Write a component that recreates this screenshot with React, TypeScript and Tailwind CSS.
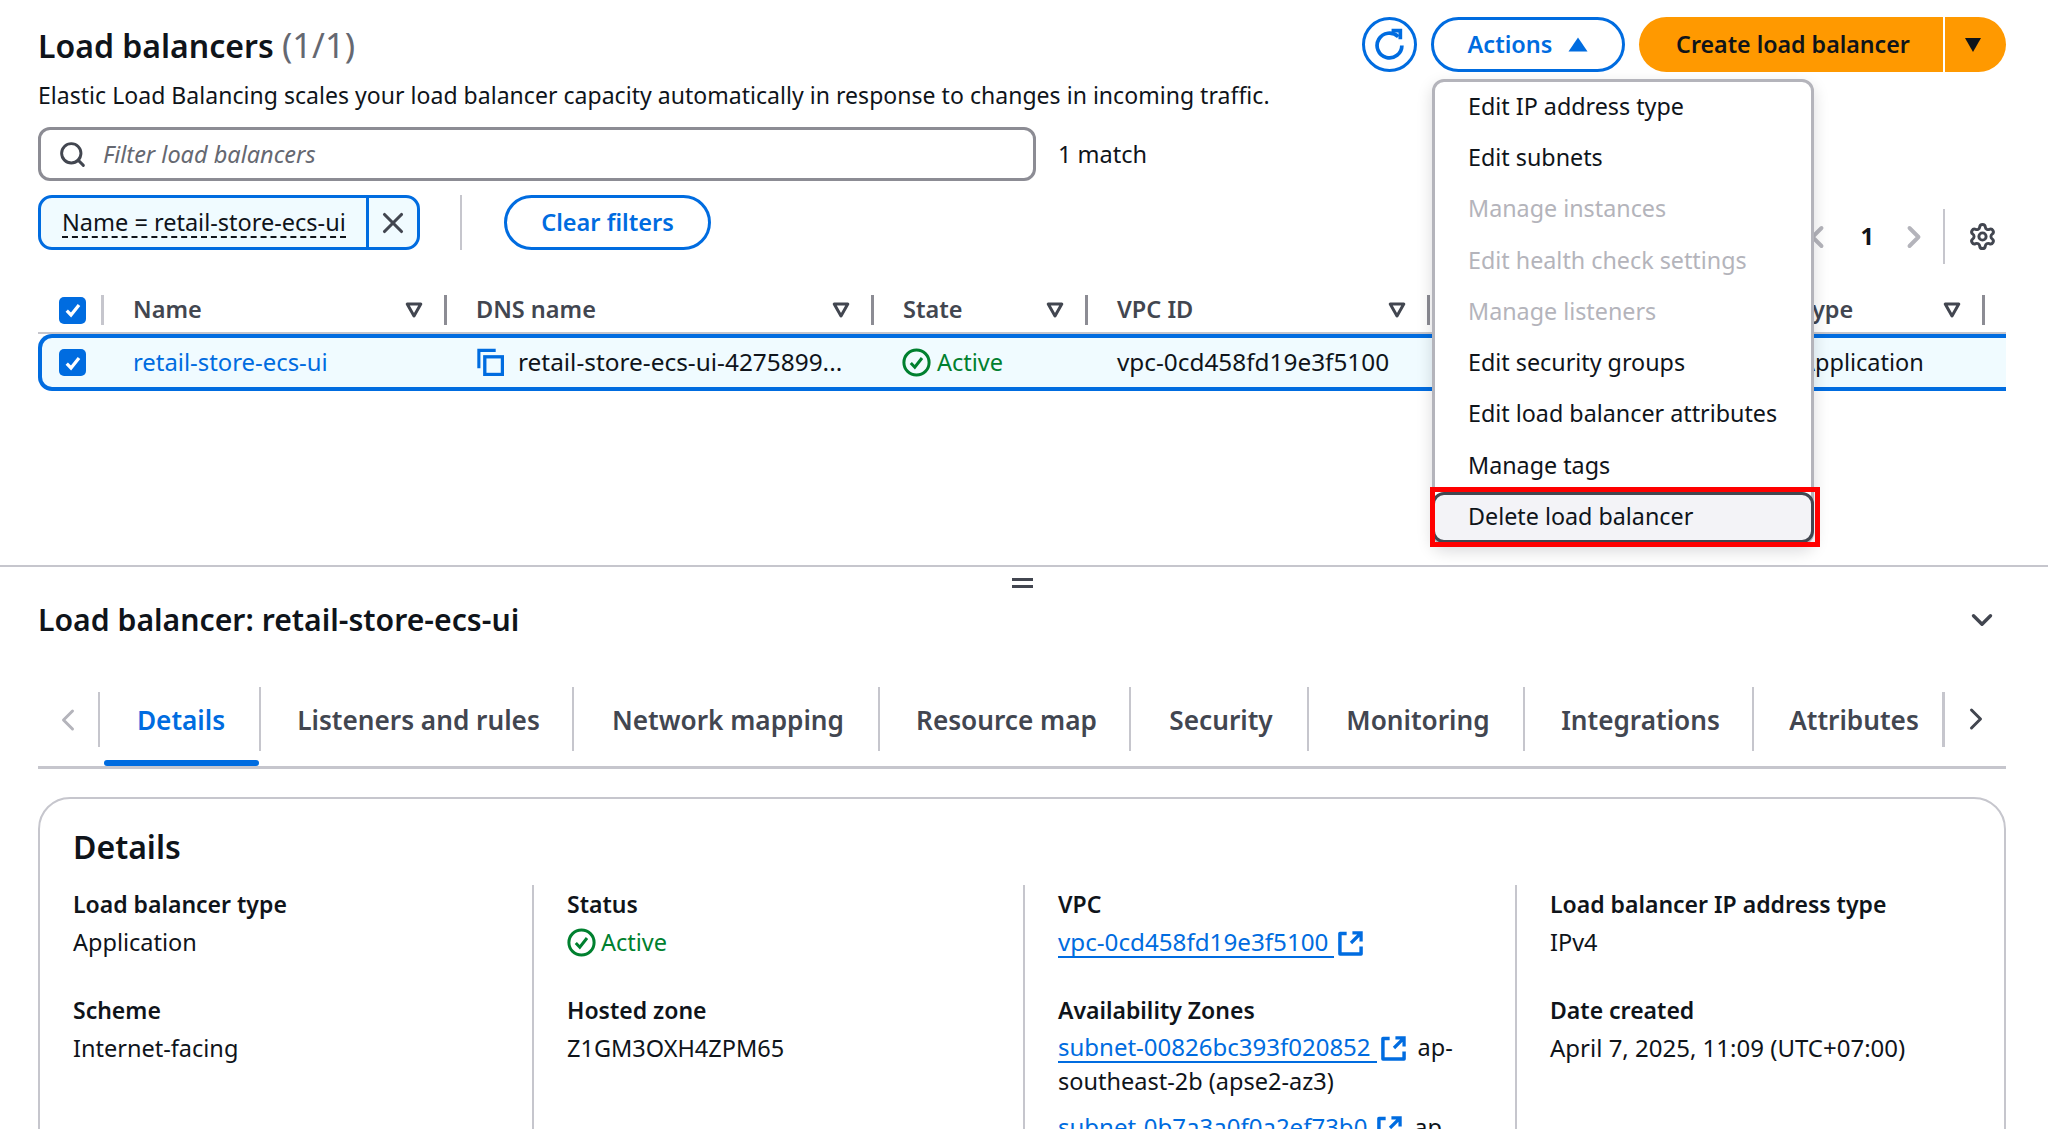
import { Search, X, ChevronLeft, ChevronRight, ChevronDown, Settings } from 'lucide-react';

const menuItems = [
  { label: 'Edit IP address type' },
  { label: 'Edit subnets' },
  { label: 'Manage instances', disabled: true },
  { label: 'Edit health check settings', disabled: true },
  { label: 'Manage listeners', disabled: true },
  { label: 'Edit security groups' },
  { label: 'Edit load balancer attributes' },
  { label: 'Manage tags' },
];

const tabs = [
  { label: 'Details', width: 'w-[161px] border-r-2', active: true },
  { label: 'Listeners and rules', width: 'w-[313px] border-r-2' },
  { label: 'Network mapping', width: 'w-[306px] border-r-2' },
  { label: 'Resource map', width: 'w-[251px] border-r-2' },
  { label: 'Security', width: 'w-[178px] border-r-2' },
  { label: 'Monitoring', width: 'w-[216px] border-r-2' },
  { label: 'Integrations', width: 'w-[229px] border-r-2' },
  { label: 'Attributes', width: 'w-[188px] pl-[12px]' },
];

function FilterCaret() {
  return (
    <svg viewBox="0 0 18 18" className="h-[18px] w-[18px] shrink-0">
      <path d="M2.2 3h13.6L9 15z" fill="none" stroke="#424650" strokeWidth="3" strokeLinejoin="round" />
    </svg>
  );
}

function CheckBox() {
  return (
    <span className="flex h-[27px] w-[27px] items-center justify-center rounded-[5px] bg-[#006ce0]">
      <svg viewBox="0 0 16 16" className="h-[20px] w-[20px]">
        <path d="M3 8.5l3.4 3.5 6.4-8" fill="none" stroke="white" strokeWidth="2.6" />
      </svg>
    </span>
  );
}

function StatusIcon() {
  return (
    <svg viewBox="0 0 29 29" className="h-[29px] w-[29px] shrink-0">
      <circle cx="14.5" cy="14.5" r="12.6" fill="none" stroke="#00802f" strokeWidth="3" />
      <path d="M8.8 15l4 4.2 7.2-9.2" fill="none" stroke="#00802f" strokeWidth="3" />
    </svg>
  );
}

function ExternalIcon() {
  return (
    <svg viewBox="0 0 26 26" className="h-[25px] w-[25px] shrink-0">
      <path d="M9 2.5H2v21.5h22V16" fill="none" stroke="#006ce0" strokeWidth="3.6" strokeLinejoin="round" />
      <path d="M15 2h9v9M23 3L13.5 12.5" fill="none" stroke="#006ce0" strokeWidth="3.4" />
    </svg>
  );
}

function TableHeadCell({ label, sep = 'bg-[#8c8c94]' }: { label: string; sep?: string }) {
  return (
    <div className="relative flex h-[30px] items-center justify-between pl-[29px] pr-[24px]">
      <span className="font-semibold text-[#424650]">{label}</span>
      <FilterCaret />
      <span className={`absolute right-0 top-0 h-[30px] w-[3px] ${sep}`} />
    </div>
  );
}

function Field({ label, children }: { label: string; children: React.ReactNode }) {
  return (
    <div>
      <div className="h-[38px] text-[23px] font-semibold leading-[38px] text-[#0f141a]">{label}</div>
      <div className="leading-[38px] text-[#0f141a]">{children}</div>
    </div>
  );
}

function ExternalLink({ id, size = 'text-[24px]' }: { id: string; size?: string }) {
  return (
    <span className="mr-[12px] inline-flex items-center gap-[4px]">
      <span className={`border-b-2 border-[#006ce0] pr-[6px] leading-[28px] text-[#006ce0] ${size}`}>{id}</span>
      <ExternalIcon />
    </span>
  );
}

export default function App() {
  return (
    <div className="relative h-[1129px] w-[2048px] overflow-hidden bg-white font-['Noto_Sans',sans-serif] text-[23.5px] text-[#0f141a]">
      {/* Parte de cima: lista */}
      <div className="h-[567px] border-b-2 border-[#c6c6cd] pl-[38px] pr-[42px] pt-[17px]">
        <div className="flex h-[55px] items-center justify-between">
          <h1 className="text-[32px] font-semibold">
            Load balancers <span className="text-[34.5px] font-normal text-[#656871]">(1/1)</span>
          </h1>
          <div className="flex items-center">
            <button className="flex h-[55px] w-[55px] items-center justify-center rounded-full border-[3px] border-[#006ce0]">
              <svg viewBox="0 0 32 32" className="h-[33px] w-[33px]">
                <path d="M24.5 8.5A12 12 0 1 0 28 17" fill="none" stroke="#006ce0" strokeWidth="3.6" />
                <path d="M18 2.5h8.5v8.5" fill="none" stroke="#006ce0" strokeWidth="3.6" />
              </svg>
            </button>
            <button className="ml-[14px] flex h-[55px] w-[194px] items-center justify-center gap-[16px] rounded-full border-[3px] border-[#006ce0] font-semibold text-[#006ce0]">
              Actions
              <svg viewBox="0 0 20 15" className="h-[15px] w-[20px]">
                <path d="M10 .5l9.5 14H.5z" fill="#006ce0" />
              </svg>
            </button>
            <div className="ml-[14px] flex h-[55px] w-[367px] overflow-hidden rounded-full bg-[#ff9900] text-[23.2px] font-semibold">
              <button className="flex-1 pl-[4px]">Create load balancer</button>
              <button className="flex w-[63px] items-center justify-center border-l-2 border-white pr-[6px]">
                <svg viewBox="0 0 18 16" className="h-[16px] w-[18px]">
                  <path d="M9 15L17 1H1z" fill="#0f141a" />
                </svg>
              </button>
            </div>
          </div>
        </div>

        <p className="mt-[8px] h-[30px] text-[23px] leading-[30px] tracking-[0.035px]">
          Elastic Load Balancing scales your load balancer capacity automatically in response to changes in incoming traffic.
        </p>

        <div className="mt-[17px] flex items-center">
          <div className="flex h-[54px] w-[998px] items-center rounded-[12px] border-[3px] border-[#8c8c94] pl-[17px]">
            <Search className="h-[29px] w-[29px] text-[#424650]" strokeWidth={2.4} />
            <span className="ml-[16px] pt-[2px] italic text-[#656871]">Filter load balancers</span>
          </div>
          <span className="ml-[22px] pt-[2px]">1 match</span>
        </div>

        <div className="mt-[14px] flex h-[55px] items-start">
          <div className="flex h-[55px] w-[382px] rounded-[14px] border-[3px] border-[#006ce0] bg-[#f0fbff]">
            <div className="flex flex-1 items-center pl-[21px]">
              <span className="border-b-2 border-dashed border-[#0f141a] leading-[28px]">Name = retail-store-ecs-ui</span>
            </div>
            <button className="flex w-[51px] items-center justify-center border-l-[3px] border-[#006ce0]">
              <X className="h-[34px] w-[34px] text-[#424650]" strokeWidth={2.2} />
            </button>
          </div>
          <span className="ml-[40px] h-[55px] w-[2px] bg-[#c6c6cd]" />
          <button className="ml-[42px] h-[55px] w-[207px] rounded-full border-[3px] border-[#006ce0] font-semibold text-[#006ce0]">
            Clear filters
          </button>
          <div className="ml-auto mt-[14px] flex h-[55px] items-center">
            <ChevronLeft className="h-[36px] w-[36px] text-[#b4b4bb]" strokeWidth={2.6} />
            <span className="ml-[26px] font-bold">1</span>
            <ChevronRight className="ml-[22px] h-[36px] w-[36px] text-[#b4b4bb]" strokeWidth={2.6} />
            <span className="ml-[11px] h-[55px] w-[2px] bg-[#c6c6cd]" />
            <Settings className="ml-[23px] mr-[9px] h-[29px] w-[29px] text-[#424650]" strokeWidth={2.4} />
          </div>
        </div>

        {/* Tabela */}
        <div className="mt-[45px] grid grid-cols-[66px_343px_427px_214px_342px_340px_215px_1fr] items-center border-b-2 border-[#c6c6cd] pb-[7px]">
          <div className="relative flex h-[30px] items-center pl-[21px]">
            <CheckBox />
            <span className="absolute right-0 top-0 h-[30px] w-[3px] bg-[#c6c6cd]" />
          </div>
          <TableHeadCell label="Name" />
          <TableHeadCell label="DNS name" />
          <TableHeadCell label="State" />
          <TableHeadCell label="VPC ID" />
          <div />
          <TableHeadCell label="Type" />
        </div>
        <div className="grid h-[57px] grid-cols-[62px_343px_427px_214px_342px_340px_1fr] items-center rounded-l-[14px] border-y-[4px] border-l-[4px] border-[#006ce0] bg-[#f0fbff]">
          <div className="flex pl-[17px]">
            <CheckBox />
          </div>
          <div className="pl-[29px] text-[23.85px] text-[#006ce0]">retail-store-ecs-ui</div>
          <div className="flex items-center pl-[30px]">
            <svg viewBox="0 0 26 26" className="h-[28px] w-[27px] shrink-0">
              <path d="M1.8 19V1.8H18" fill="none" stroke="#006ce0" strokeWidth="3" />
              <rect x="7.5" y="8" width="17" height="17" fill="none" stroke="#006ce0" strokeWidth="3.2" />
            </svg>
            <span className="ml-[14px] whitespace-nowrap text-[24.4px]">retail-store-ecs-ui-4275899...</span>
          </div>
          <div className="flex items-center pl-[28px] text-[#00802f]">
            <StatusIcon />
            <span className="ml-[6px]">Active</span>
          </div>
          <div className="pl-[29px] text-[24.35px]">vpc-0cd458fd19e3f5100</div>
          <div />
          <div className="pl-[30px]">Application</div>
        </div>
      </div>

      {/* Parte de baixo: detalhes */}
      <div className="relative pl-[38px] pr-[42px]">
        <div className="absolute left-[1012px] top-[11px] flex h-[10px] w-[21px] flex-col justify-between">
          <span className="h-[3px] bg-[#424650]" />
          <span className="h-[3px] bg-[#424650]" />
        </div>
        <div className="flex h-[120px] items-center justify-between pb-[15px]">
          <h2 className="text-[30.2px] font-semibold">Load balancer: retail-store-ecs-ui</h2>
          <ChevronDown className="mr-[7px] h-[34px] w-[34px] text-[#424650]" strokeWidth={2.4} />
        </div>

        <div className="flex h-[82px] items-start border-b-[3px] border-[#c6c6cd]">
          <div className="mt-[5px] flex h-[55px] w-[62px] items-center justify-center border-r-2 border-[#c6c6cd]">
            <ChevronLeft className="h-[36px] w-[36px] text-[#b4b4bb]" strokeWidth={2} />
          </div>
          {tabs.map((tab) => (
            <div
              key={tab.label}
              className={`relative flex h-[64px] shrink-0 items-center justify-center border-[#c6c6cd] pt-[3px] text-[26.2px] font-semibold ${tab.width} ${tab.active ? 'pl-[3px] text-[#006ce0]' : 'pl-[4px] text-[#424650]'}`}
            >
              {tab.label}
              {tab.active && <span className="absolute bottom-[-15px] left-[4px] right-0 h-[6px] rounded-[3px] bg-[#006ce0]" />}
            </div>
          ))}
          <div className="mt-[5px] h-[55px] w-[3px] bg-[#c6c6cd]" />
          <ChevronRight className="ml-[13px] mt-[14px] h-[36px] w-[36px] text-[#424650]" strokeWidth={2} />
        </div>

        <div className="mt-[28px] h-[400px] rounded-[32px] border-2 border-[#c6c6cd] pl-[33px] pt-[25px]">
          <h3 className="text-[32px] font-semibold leading-[46px]">Details</h3>
          <div className="mt-[15px] grid grid-cols-[459px_491px_492px_1fr]">
            <div className="flex flex-col gap-[30px]">
              <Field label="Load balancer type">Application</Field>
              <Field label="Scheme">Internet-facing</Field>
            </div>
            <div className="flex h-[300px] flex-col gap-[30px] border-l-2 border-[#c6c6cd] pl-[33px]">
              <Field label="Status">
                <span className="flex h-[38px] items-center gap-[5px] text-[#00802f]">
                  <StatusIcon />
                  Active
                </span>
              </Field>
              <Field label="Hosted zone">Z1GM3OXH4ZPM65</Field>
            </div>
            <div className="flex h-[300px] flex-col gap-[30px] border-l-2 border-[#c6c6cd] pl-[33px]">
              <Field label="VPC">
                <ExternalLink id="vpc-0cd458fd19e3f5100" size="text-[24.2px]" />
              </Field>
              <Field label="Availability Zones">
                <div className="mt-[1px] w-[420px] leading-[34px]">
                  <ExternalLink id="subnet-00826bc393f020852" />
                  ap-southeast-2b (apse2-az3)
                </div>
                <div className="mt-[12px] leading-[34px]">
                  <ExternalLink id="subnet-0b7a3a0f0a2ef73b0" />
                  ap-
                </div>
              </Field>
            </div>
            <div className="flex h-[300px] flex-col gap-[30px] border-l-2 border-[#c6c6cd] pl-[33px]">
              <Field label="Load balancer IP address type">IPv4</Field>
              <Field label="Date created">
                <span className="text-[24px]">April 7, 2025, 11:09 (UTC+07:00)</span>
              </Field>
            </div>
          </div>
        </div>
      </div>

      {/* Menu Actions aberto */}
      <div className="absolute left-[1432px] top-[79px] z-10 h-[466px] w-[382px] rounded-[12px] border-[3px] border-[#b4b4bb] bg-white text-[23.3px] shadow-[0_6px_16px_rgba(0,7,22,0.15)]">
        {menuItems.map((item) => (
          <div
            key={item.label}
            className={`flex h-[51.3px] items-center pb-[3px] pl-[33px] ${item.disabled ? 'text-[#b4b4bb]' : 'text-[#0f141a]'}`}
          >
            {item.label}
          </div>
        ))}
        <div className="-mx-[3px] flex h-[51px] items-center rounded-[12px] border-[3px] border-[#424650] bg-[#f3f3f7] pb-[2px] pl-[33px]">
          Delete load balancer
        </div>
      </div>
      <div className="absolute left-[1430px] top-[487px] z-20 h-[60px] w-[390px] border-[5px] border-[#ff0000]" />
    </div>
  );
}
